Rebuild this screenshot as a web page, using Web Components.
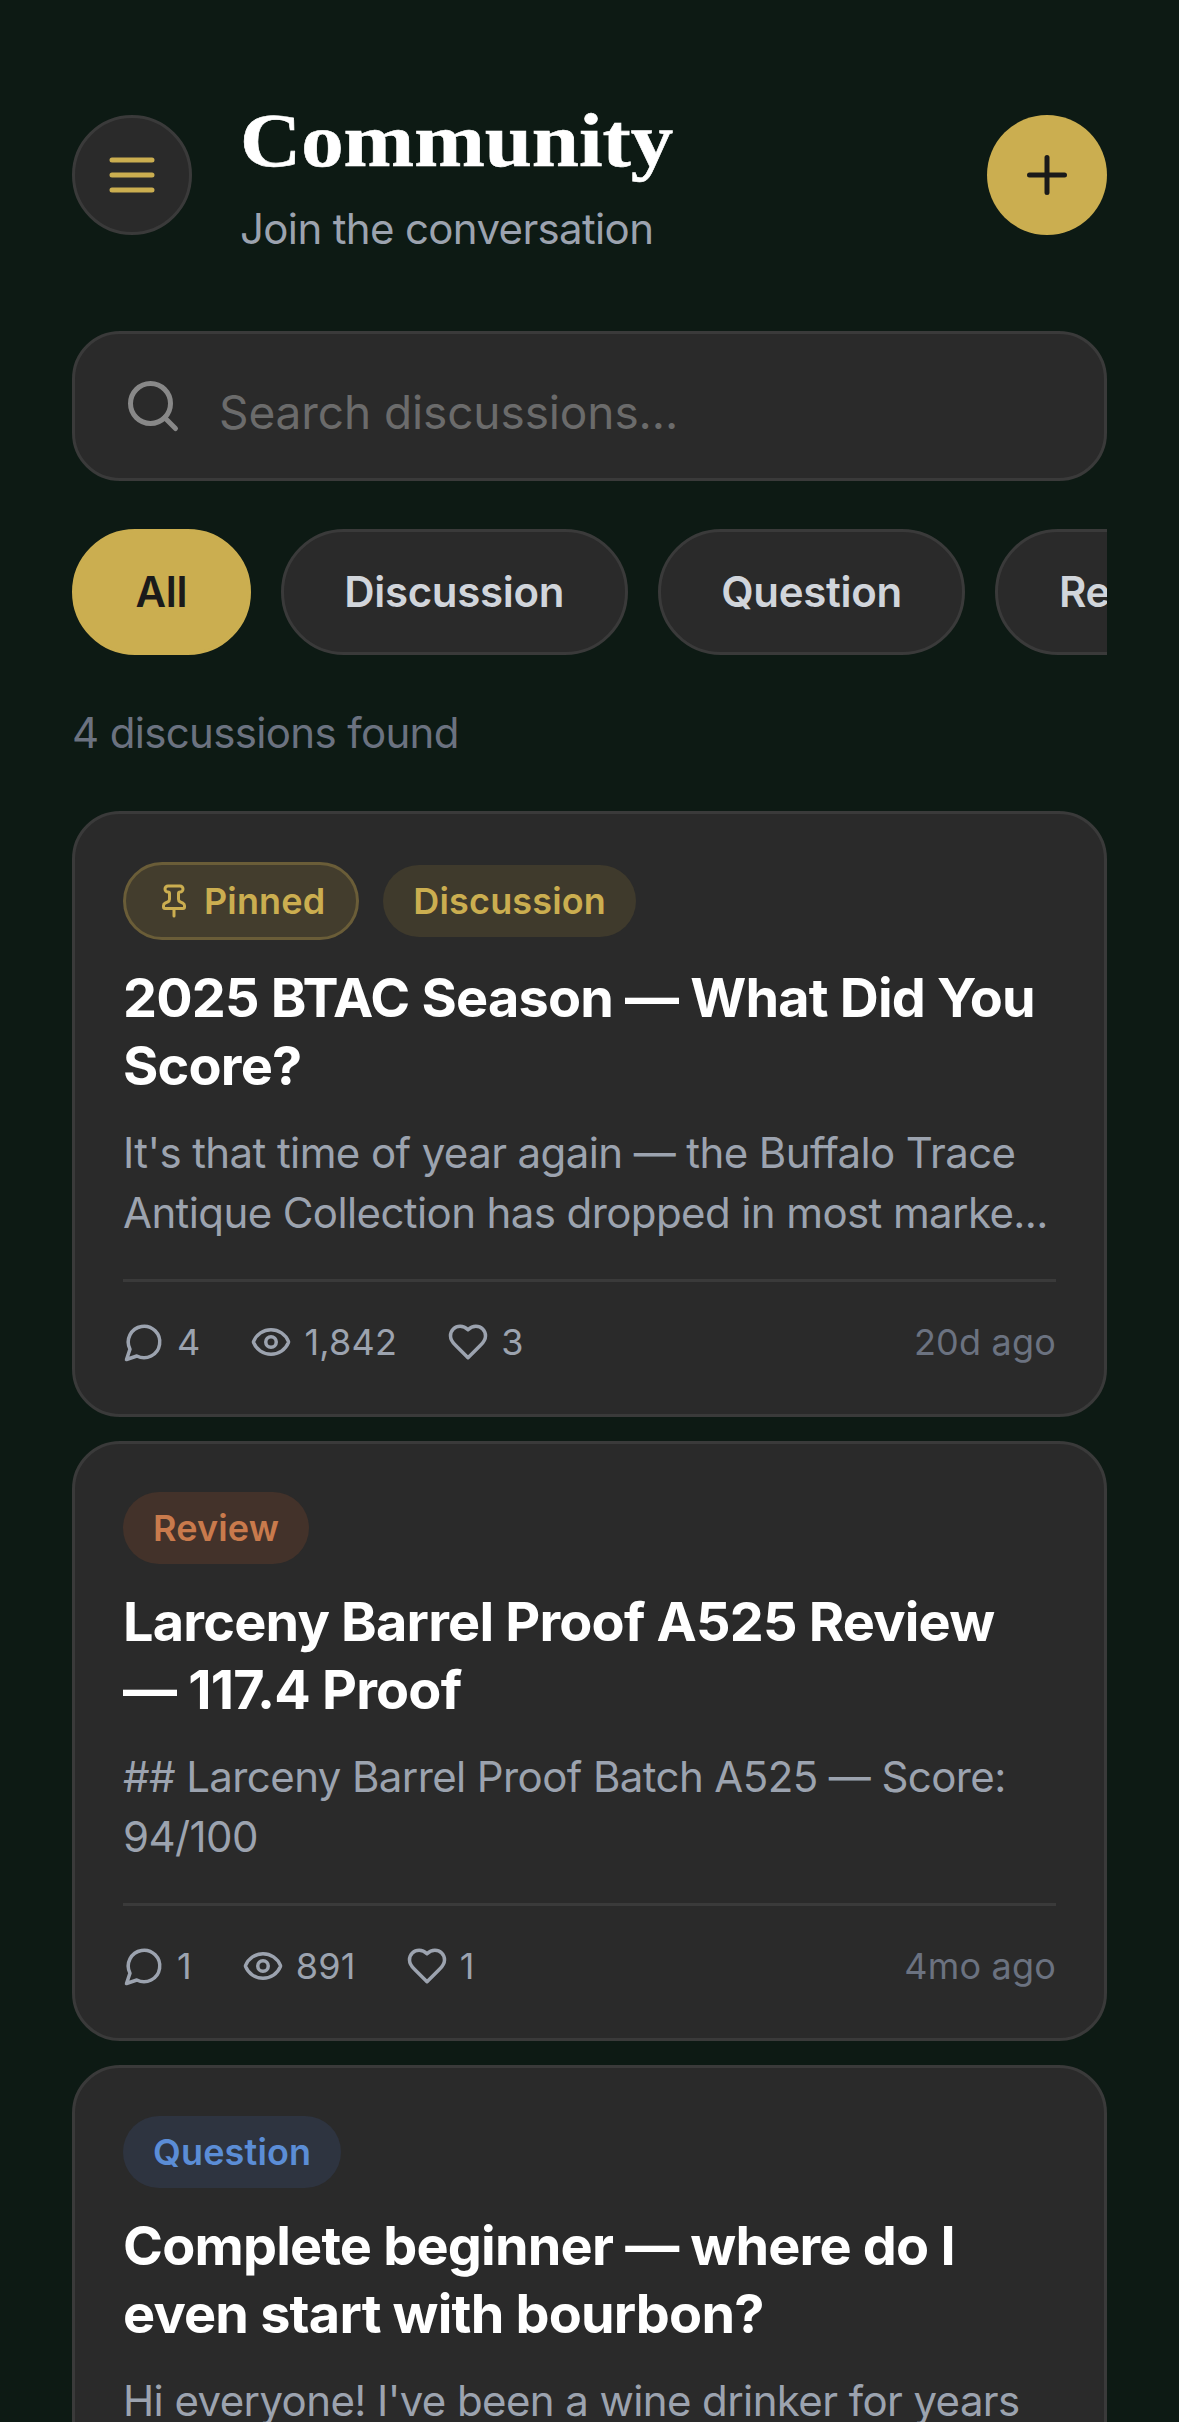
<!DOCTYPE html>
<html>
<head>
<meta charset="utf-8">
<style>
  html, body { margin: 0; padding: 0; background: #0d1a14; }
  body { width: 1179px; height: 2422px; overflow: hidden; font-family: Inter, "Liberation Sans", sans-serif; }
  community-page { display: block; }
</style>
</head>
<body>
<community-page>
  <page-header title-text="Community" sub="Join the conversation"></page-header>
  <search-box placeholder="Search discussions..."></search-box>
  <filter-bar>
    <filter-chip active>All</filter-chip>
    <filter-chip>Discussion</filter-chip>
    <filter-chip>Question</filter-chip>
    <filter-chip>Review</filter-chip>
  </filter-bar>
  <result-count>4 discussions found</result-count>
  <post-card comments="4" views="1,842" likes="3" age="20d ago">
    <post-tag slot="tags" kind="pinned">Pinned</post-tag>
    <post-tag slot="tags" kind="discussion">Discussion</post-tag>
    <span slot="title">2025 BTAC Season — What Did You Score?</span>
    <span slot="excerpt">It's that time of year again — the Buffalo Trace Antique Collection has dropped in most marke...</span>
  </post-card>
  <post-card comments="1" views="891" likes="1" age="4mo ago">
    <post-tag slot="tags" kind="review">Review</post-tag>
    <span slot="title">Larceny Barrel Proof A525 Review — 117.4 Proof</span>
    <span slot="excerpt">## Larceny Barrel Proof Batch A525 — Score: 94/100</span>
  </post-card>
  <post-card comments="6" views="1,204" likes="8" age="5mo ago">
    <post-tag slot="tags" kind="question">Question</post-tag>
    <span slot="title">Complete beginner — where do I even start with bourbon?</span>
    <span slot="excerpt">Hi everyone! I've been a wine drinker for years</span>
  </post-card>
</community-page>

<script>
const icons = {
  menu: '<path d="M4 6h16M4 12h16M4 18h16"/>',
  plus: '<path d="M5 12h14M12 5v14"/>',
  search: '<circle cx="11" cy="11" r="8"/><path d="m21 21-4.3-4.3"/>',
  pin: '<path d="M12 17v5"/><path d="M9 10.76a2 2 0 0 1-1.11 1.79l-1.78.9A2 2 0 0 0 5 15.24V16a1 1 0 0 0 1 1h12a1 1 0 0 0 1-1v-.76a2 2 0 0 0-1.11-1.79l-1.78-.9A2 2 0 0 1 15 10.76V7a1 1 0 0 1 1-1 2 2 0 0 0 0-4H8a2 2 0 0 0 0 4 1 1 0 0 1 1 1z"/>',
  comment: '<path d="M7.9 20A9 9 0 1 0 4 16.1L2 22Z"/>',
  eye: '<path d="M2.06 12.35a1 1 0 0 1 0-.7 10.75 10.75 0 0 1 19.88 0 1 1 0 0 1 0 .7 10.75 10.75 0 0 1-19.88 0"/><circle cx="12" cy="12" r="3"/>',
  heart: '<path d="M19 14c1.49-1.46 3-3.21 3-5.5A5.5 5.5 0 0 0 16.5 3c-1.76 0-3 .5-4.5 2-1.5-1.5-2.74-2-4.5-2A5.5 5.5 0 0 0 2 8.5c0 2.3 1.5 4.05 3 5.5l7 7Z"/>'
}
function icon(name, size, sw) {
  return `<svg width="${size}" height="${size}" viewBox="0 0 24 24" fill="none" stroke="currentColor" stroke-width="${sw}" stroke-linecap="round" stroke-linejoin="round">${icons[name]}</svg>`
}

class CommunityPage extends HTMLElement {
  constructor() {
    super()
    this.attachShadow({mode: 'open'}).innerHTML = `
      <style>
        :host { display: block; padding: 115px 72px 0; box-sizing: border-box; color: #fff; }
      </style>
      <slot></slot>`
  }
}

class PageHeader extends HTMLElement {
  constructor() {
    super()
    this.attachShadow({mode: 'open'}).innerHTML = `
      <style>
        :host { display: flex; align-items: flex-start; height: 120px; margin-bottom: 96px; }
        button { width: 120px; height: 120px; flex: none; border-radius: 50%; box-sizing: border-box; padding: 0; display: flex; align-items: center; justify-content: center; }
        .menu { background: #2a2a2a; border: 3px solid #3a3a3a; color: #cbae50; }
        .add { background: #cbae50; border: none; color: #1a1a1a; margin-left: auto; }
        .text { margin-left: 48px; margin-top: -20px; }
        /* no Georgia here: Liberation Serif stretched to the same width */
        h1 { margin: 0; font: 700 76px/90px "Liberation Serif", serif; transform: scaleX(1.115); transform-origin: left center; -webkit-text-stroke: 0.6px #fff; color: #fff; white-space: nowrap; }
        p { margin: 19px 0 0; font: 400 42px/50px Inter, sans-serif; letter-spacing: -0.65px; color: #9ca3af; white-space: nowrap; }
      </style>
      <button class="menu">${icon('menu', 60, 2)}</button>
      <div class="text">
        <h1>${this.getAttribute('title-text')}</h1>
        <p>${this.getAttribute('sub')}</p>
      </div>
      <button class="add">${icon('plus', 60, 2)}</button>`
  }
}

class SearchBox extends HTMLElement {
  constructor() {
    super()
    this.attachShadow({mode: 'open'}).innerHTML = `
      <style>
        :host { display: flex; align-items: center; height: 150px; box-sizing: border-box; background: #2a2a2a; border: 3px solid #3a3a3a; border-radius: 48px; padding: 0 48px; gap: 36px; color: #888; margin-bottom: 48px; }
        span { font: 400 46px/60px Inter, sans-serif; letter-spacing: -0.1px; color: #6b6b6b; white-space: nowrap; margin-top: 12px; }
        svg { flex: none; }
      </style>
      ${icon('search', 60, 2)}
      <span>${this.getAttribute('placeholder')}</span>`
  }
}

class FilterBar extends HTMLElement {
  constructor() {
    super()
    this.attachShadow({mode: 'open'}).innerHTML = `
      <style>
        :host { display: flex; gap: 30px; overflow: hidden; margin-bottom: 53px; }
      </style>
      <slot></slot>`
  }
}

class FilterChip extends HTMLElement {
  constructor() {
    super()
    this.attachShadow({mode: 'open'}).innerHTML = `
      <style>
        :host { display: flex; align-items: center; flex: none; height: 126px; box-sizing: border-box; padding: 0 60.5px; border-radius: 63px; background: #2a2a2a; border: 3px solid #3a3a3a; color: #d1d5db; font: 600 42px/50px Inter, sans-serif; letter-spacing: -0.3px; white-space: nowrap; }
        :host([active]) { background: #cbae50; border-color: #cbae50; color: #1a1a1a; }
      </style>
      <slot></slot>`
  }
}

class ResultCount extends HTMLElement {
  constructor() {
    super()
    this.attachShadow({mode: 'open'}).innerHTML = `
      <style>
        :host { display: block; font: 400 42px/50px Inter, sans-serif; letter-spacing: -0.65px; color: #6b7280; margin-bottom: 53px; }
      </style>
      <slot></slot>`
  }
}

class PostTag extends HTMLElement {
  constructor() {
    super()
    let kind = this.getAttribute('kind')
    let pin = kind == 'pinned' ? icon('pin', 36, 2) : ''
    this.attachShadow({mode: 'open'}).innerHTML = `
      <style>
        :host { display: inline-flex; align-items: center; gap: 12px; height: 72px; box-sizing: border-box; padding: 0 30px; border-radius: 36px; font: 600 36px/44px Inter, sans-serif; letter-spacing: 0.15px; white-space: nowrap; }
        :host([kind=pinned]) { height: 78px; padding: 0 31px 0 30px; border-radius: 39px; color: #cbae50; background: #433d2d; border: 3px solid #6a5d38; }
        :host([kind=discussion]) { color: #cbae50; background: #3f3a2c; }
        :host([kind=review]) { color: #c97a4c; background: #43322a; }
        :host([kind=question]) { color: #5b8dd6; background: #2e3440; }
      </style>
      ${pin}<slot></slot>`
  }
}

class PostCard extends HTMLElement {
  constructor() {
    super()
    let a = n => this.getAttribute(n)
    this.attachShadow({mode: 'open'}).innerHTML = `
      <style>
        :host { display: block; box-sizing: border-box; background: #2a2a2a; border: 3px solid #3a3a3a; border-radius: 48px; padding: 48px; margin-bottom: 24px; }
        .tags { display: flex; align-items: center; gap: 24px; margin-bottom: 24px; }
        .title { font: 700 54px/68px Inter, sans-serif; letter-spacing: -0.8px; color: #fff; margin-bottom: 23px; }
        .excerpt { font: 400 42px/60px Inter, sans-serif; letter-spacing: -0.6px; color: #9ca3af; }
        .meta { display: flex; align-items: center; height: 48px; border-top: 3px solid #3a3a3a; margin-top: 36px; padding-top: 36px; color: #9ca3af; font: 400 36px/48px Inter, sans-serif; letter-spacing: 0.2px; }
        .stat { display: flex; align-items: center; gap: 12px; margin-right: 50px; }
        .age { margin-left: auto; color: #6b7280; }
      </style>
      <div class="tags"><slot name="tags"></slot></div>
      <div class="title"><slot name="title"></slot></div>
      <div class="excerpt"><slot name="excerpt"></slot></div>
      <div class="meta">
        <span class="stat">${icon('comment', 42, 2)}${a('comments')}</span>
        <span class="stat">${icon('eye', 42, 2)}${a('views')}</span>
        <span class="stat">${icon('heart', 42, 2)}${a('likes')}</span>
        <span class="age">${a('age')}</span>
      </div>`
  }
}

customElements.define('community-page', CommunityPage)
customElements.define('page-header', PageHeader)
customElements.define('search-box', SearchBox)
customElements.define('filter-bar', FilterBar)
customElements.define('filter-chip', FilterChip)
customElements.define('result-count', ResultCount)
customElements.define('post-tag', PostTag)
customElements.define('post-card', PostCard)
</script>
</body>
</html>
